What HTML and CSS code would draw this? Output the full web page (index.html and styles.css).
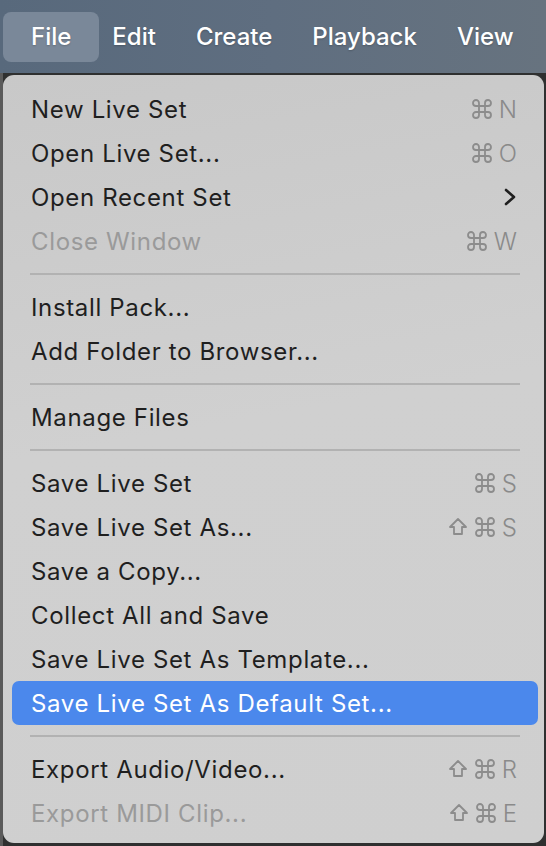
FILE: index.html
```html
<!DOCTYPE html>
<html lang="en">
<head>
<meta charset="utf-8">
<title>File menu</title>
<link rel="stylesheet" href="styles.css">
</head>
<body>
<div class="screen">
  <header class="menubar">
    <span class="mb-item active">File</span>
    <span class="mb-item">Edit</span>
    <span class="mb-item">Create</span>
    <span class="mb-item">Playback</span>
    <span class="mb-item">View</span>
  </header>
  <div class="workspace">
    <div class="menu">
      <div class="row"><span class="label">New Live Set</span><span class="keys"><svg class="cmd" viewBox="0 0 20 20"><path d="M7 7V4A3 3 0 1 0 4 7H16A3 3 0 1 0 13 4V16A3 3 0 1 0 16 13H4A3 3 0 1 0 7 16Z"/></svg><span class="key">N</span></span></div>
      <div class="row"><span class="label">Open Live Set...</span><span class="keys"><svg class="cmd" viewBox="0 0 20 20"><path d="M7 7V4A3 3 0 1 0 4 7H16A3 3 0 1 0 13 4V16A3 3 0 1 0 16 13H4A3 3 0 1 0 7 16Z"/></svg><span class="key">O</span></span></div>
      <div class="row"><span class="label">Open Recent Set</span><span class="keys"><svg class="chev" viewBox="0 0 12 18"><path d="M2 2L10 9L2 16"/></svg></span></div>
      <div class="row disabled"><span class="label">Close Window</span><span class="keys"><svg class="cmd" viewBox="0 0 20 20"><path d="M7 7V4A3 3 0 1 0 4 7H16A3 3 0 1 0 13 4V16A3 3 0 1 0 16 13H4A3 3 0 1 0 7 16Z"/></svg><span class="key">W</span></span></div>
      <div class="sep"></div>
      <div class="row"><span class="label">Install Pack...</span></div>
      <div class="row"><span class="label">Add Folder to Browser...</span></div>
      <div class="sep"></div>
      <div class="row"><span class="label">Manage Files</span></div>
      <div class="sep"></div>
      <div class="row"><span class="label">Save Live Set</span><span class="keys"><svg class="cmd" viewBox="0 0 20 20"><path d="M7 7V4A3 3 0 1 0 4 7H16A3 3 0 1 0 13 4V16A3 3 0 1 0 16 13H4A3 3 0 1 0 7 16Z"/></svg><span class="key">S</span></span></div>
      <div class="row"><span class="label">Save Live Set As...</span><span class="keys"><svg class="shift" viewBox="0 0 20 20"><path d="M10 2L18 10H14V17H6V10H2Z"/></svg><svg class="cmd" viewBox="0 0 20 20"><path d="M7 7V4A3 3 0 1 0 4 7H16A3 3 0 1 0 13 4V16A3 3 0 1 0 16 13H4A3 3 0 1 0 7 16Z"/></svg><span class="key">S</span></span></div>
      <div class="row"><span class="label">Save a Copy...</span></div>
      <div class="row"><span class="label">Collect All and Save</span></div>
      <div class="row"><span class="label">Save Live Set As Template...</span></div>
      <div class="row selected"><span class="label">Save Live Set As Default Set...</span></div>
      <div class="sep"></div>
      <div class="row"><span class="label">Export Audio/Video...</span><span class="keys"><svg class="shift" viewBox="0 0 20 20"><path d="M10 2L18 10H14V17H6V10H2Z"/></svg><svg class="cmd" viewBox="0 0 20 20"><path d="M7 7V4A3 3 0 1 0 4 7H16A3 3 0 1 0 13 4V16A3 3 0 1 0 16 13H4A3 3 0 1 0 7 16Z"/></svg><span class="key">R</span></span></div>
      <div class="row disabled"><span class="label">Export MIDI Clip...</span><span class="keys"><svg class="shift" viewBox="0 0 20 20"><path d="M10 2L18 10H14V17H6V10H2Z"/></svg><svg class="cmd" viewBox="0 0 20 20"><path d="M7 7V4A3 3 0 1 0 4 7H16A3 3 0 1 0 13 4V16A3 3 0 1 0 16 13H4A3 3 0 1 0 7 16Z"/></svg><span class="key">E</span></span></div>
    </div>
  </div>
</div>
</body>
</html>
```

FILE: styles.css
```css
* { box-sizing: border-box; }
html, body {
  margin: 0;
  padding: 0;
  width: 546px;
  height: 846px;
  overflow: hidden;
  background: #2f3030;
  font-family: Inter, "Noto Sans", "Liberation Sans", sans-serif;
}
.screen {
  display: flex;
  flex-direction: column;
  height: 846px;
}
.menubar {
  height: 73px;
  flex: none;
  display: flex;
  align-items: center;
  padding: 0 0 0 3px;
  background: linear-gradient(90deg, #58697c 0%, #5f6e80 50%, #67737f 100%);
  color: #ffffff;
  font-size: 24px;
  font-weight: 500;
  letter-spacing: 0;
}
.mb-item {
  display: flex;
  align-items: center;
  height: 50px;
  padding: 0 20px;
  text-shadow: 0 1px 2px rgba(0,0,0,0.2);
}
.mb-item.active {
  padding: 0 28px 0 28px;
  margin-right: -7px;
  background: #7a8899;
  border-radius: 8px;
}
.workspace {
  flex: 1;
  display: flex;
  padding: 2px 2px 3px 3px;
  background: linear-gradient(90deg, #5a5a5a 0px, #5a5a5a 3px, #2f3030 3px);
}
.menu {
  flex: 1;
  display: flex;
  flex-direction: column;
  padding: 12px 6px 8px 9px;
  border-radius: 11px;
  background: linear-gradient(170deg, #c8c8c8 0%, #d0d0d0 45%, #cfcfcf 100%);
  font-size: 24px;
  color: #1f1f1f;
}
.row {
  height: 44px;
  flex: none;
  display: flex;
  align-items: center;
  justify-content: space-between;
  padding: 0 21px 0 19px;
  border-radius: 7px;
}
.label {
  letter-spacing: 0.65px;
}
.row.disabled .label { color: #9a9a9a; }
.row.selected {
  background: #4b88ec;
  color: #ffffff;
}
.keys {
  display: flex;
  align-items: center;
  gap: 7px;
  color: #8c8c8c;
}
.key {
  font-size: 24px;
  font-weight: 300;
  color: #8a8a8a;
}
.cmd, .shift {
  width: 20px;
  height: 20px;
  fill: none;
  stroke: #8c8c8c;
  stroke-width: 1.8;
  stroke-linejoin: round;
}
.chev {
  width: 12px;
  height: 18px;
  margin-right: 1px;
  fill: none;
  stroke: #1f1f1f;
  stroke-width: 2.6;
  stroke-linecap: round;
  stroke-linejoin: round;
}
.sep {
  height: 22px;
  flex: none;
  display: flex;
  align-items: center;
  padding: 0 18px 0 18px;
}
.sep::before {
  content: "";
  flex: 1;
  height: 2px;
  background: #b2b2b2;
}
```
